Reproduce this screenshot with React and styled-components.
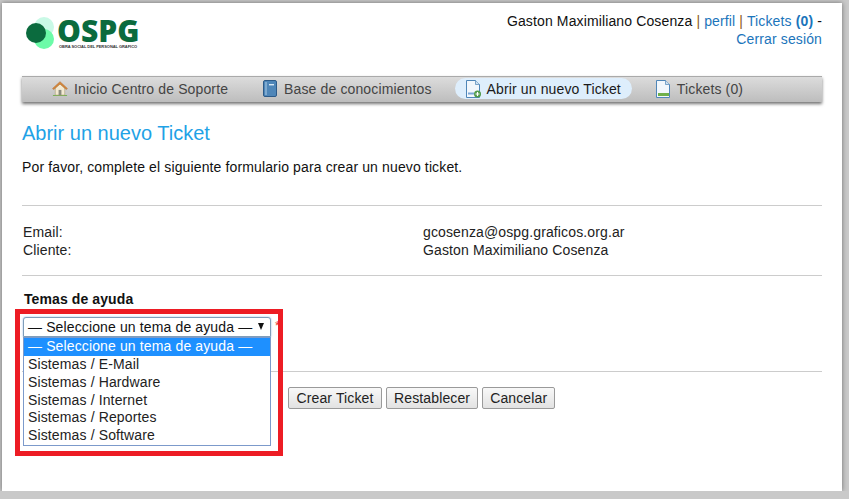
import React from 'react'
import styled, { createGlobalStyle } from 'styled-components'

const GlobalStyle = createGlobalStyle`
  html, body { margin: 0; padding: 0; background: #c9c9c9; }
  body { font-family: "Liberation Sans", Arial, sans-serif; font-size: 14px; letter-spacing: 0.13px; color: #000; overflow: hidden; }
`

const Page = styled.div`
  position: relative;
  box-sizing: border-box;
  width: 840px;
  height: 488px;
  margin: 3px 0 0 2px;
  padding: 0 20px;
  background: #fff;
  box-shadow: 0 0 5px rgba(0, 0, 0, 0.45);
`

const Header = styled.header`
  display: flex;
  justify-content: space-between;
  align-items: flex-start;
  height: 73px;
`

const Logo = styled.div`
  display: flex;
  align-items: flex-start;
  gap: 3px;
  margin: 14px 0 0 4px;
`

const LogoWords = styled.div`
  display: flex;
  flex-direction: column;
  letter-spacing: 0;
`

const LogoName = styled.span`
  font-family: "Open Sans", "Liberation Sans", sans-serif;
  font-weight: 800;
  font-size: 30px;
  line-height: 27px;
  color: #0b6b3e;
`

const LogoTag = styled.span`
  margin-left: 2px;
  font-weight: 700;
  font-size: 4px;
  line-height: 5px;
  letter-spacing: -0.05px;
  color: #333;
  white-space: nowrap;
`

const UserInfo = styled.div`
  width: 340px;
  margin-top: 9px;
  text-align: right;
  line-height: 18px;
  color: #111;
`

const Sep = styled.span`
  color: #8a5a20;
`

const TopLink = styled.a`
  color: #1b75bb;
  text-decoration: none;
`

const Nav = styled.nav`
  display: flex;
  align-items: center;
  box-sizing: border-box;
  height: 26px;
  padding: 0 0 2px 30px;
  border-top: 1px solid #aaa;
  background: linear-gradient(#dcdcdc, #bdbdbd);
  box-shadow: 0 2px 3px rgba(0, 0, 0, 0.55);
`

const NavItem = styled.a`
  display: flex;
  align-items: center;
  gap: 6px;
  height: 21px;
  margin-right: ${p => p.$gap}px;
  padding: ${p => (p.$active ? '0 11px' : '0')};
  margin-left: ${p => (p.$active ? '-11px' : '0')};
  border-radius: 11px;
  background: ${p => (p.$active ? '#deeefc' : 'transparent')};
  color: ${p => (p.$active ? '#1a1a1a' : '#444')};
  white-space: nowrap;
`

const Title = styled.h1`
  margin: 19px 0 0;
  font-size: 20px;
  line-height: 24px;
  font-weight: 400;
  letter-spacing: 0;
  color: #1fa2e6;
`

const Lead = styled.p`
  margin: 13px 0 0;
  line-height: 18px;
  color: #111;
`

const Rule = styled.hr`
  height: 1px;
  margin: ${p => p.$top}px 0 0;
  border: 0;
  background: #ccc;
`

const InfoGrid = styled.dl`
  display: grid;
  grid-template-columns: 400px 1fr;
  margin: 17px 0 0 1px;
  line-height: 18px;
  color: #222;
  dt, dd { margin: 0; }
`

const FieldLabel = styled.div`
  margin: 14px 0 0 2px;
  font-weight: 700;
  line-height: 18px;
  letter-spacing: 0.1px;
  color: #111;
`

const SelectWrap = styled.div`
  position: relative;
  width: 248px;
  height: 20px;
  margin: 9px 0 0 1px;
`

const SelectBox = styled.div`
  display: flex;
  justify-content: space-between;
  align-items: center;
  box-sizing: border-box;
  height: 20px;
  padding: 0 6px 0 4px;
  border: 1px solid #7f9db9;
  border-radius: 3px 3px 0 0;
  box-shadow: 0 0 2px #8fb4e8;
  background: #fff;
  color: #111;
  white-space: nowrap;
`

const Caret = styled.span`
  width: 0;
  height: 0;
  margin-top: -1px;
  border-left: 3.5px solid transparent;
  border-right: 3.5px solid transparent;
  border-top: 7px solid #111;
`

const Required = styled.span`
  position: absolute;
  left: 252px;
  top: 2px;
  font-size: 12px;
  color: #e33;
`

const OptionList = styled.ul`
  position: absolute;
  z-index: 2;
  top: 20px;
  left: 0;
  box-sizing: border-box;
  width: 248px;
  margin: 0;
  padding: 0;
  list-style: none;
  background: #fff;
  border: 1px solid #7c9acb;
`

const Option = styled.li`
  height: ${p => (p.$selected ? '18px' : '17.8px')};
  padding-left: 4px;
  line-height: ${p => (p.$selected ? '17px' : '17.8px')};
  background: ${p => (p.$selected ? '#1e90ff' : 'transparent')};
  color: ${p => (p.$selected ? '#fff' : '#222')};
  white-space: nowrap;
`

const Actions = styled.div`
  display: flex;
  gap: 4px;
  margin: 15px 0 0 266px;
`

const Btn = styled.button`
  box-sizing: border-box;
  height: 22px;
  padding: 0 ${p => p.$pad || 7}px;
  border: 1px solid #9a9a9a;
  border-radius: 2px;
  background: linear-gradient(#f8f8f8, #e2e2e2);
  font: 14px "Liberation Sans", Arial, sans-serif;
  letter-spacing: 0.13px;
  color: #222;
`

const Highlight = styled.div`
  position: absolute;
  z-index: 3;
  left: 13px;
  top: 306px;
  box-sizing: border-box;
  width: 268px;
  height: 147px;
  border: 5px solid #ed1c24;
  pointer-events: none;
`

function LogoMark() {
  return (
    <svg width="28" height="32" viewBox="0 0 28 32" style={{ flexShrink: 0 }}>
      <circle cx="18" cy="10" r="10" fill="#c9f9e6" />
      <circle cx="18" cy="22" r="10" fill="#6cfba8" />
      <circle cx="10" cy="16" r="10" fill="#0b6b3e" />
    </svg>
  )
}

function HouseIcon() {
  return (
    <svg width="16" height="17" viewBox="0 0 17 17">
      <path d="M1 15.5h15v1H1z" fill="#6fb04a" />
      <path d="M3.5 8v7.5h10V8L8.5 3.5z" fill="#f3ead2" stroke="#a89a70" strokeWidth=".6" />
      <path d="M.6 8.6 8.5 1.2l7.9 7.4-1.2 1-6.7-6-6.7 6z" fill="#d98a3c" stroke="#a85f20" strokeWidth=".5" />
      <path d="M7 10h3v5.5H7z" fill="#8c8c80" />
    </svg>
  )
}

function BookIcon() {
  return (
    <svg width="15" height="17" viewBox="0 0 15 17">
      <rect x=".5" y=".5" width="13" height="16" rx="1.5" fill="#4f86b8" stroke="#2d5a88" />
      <rect x="2" y="2" width="2" height="13" fill="#7eaad0" />
      <rect x="6" y="4" width="5" height="1.4" fill="#d9e8f4" />
    </svg>
  )
}

function DocIcon({ plus }) {
  return (
    <svg width="15" height="18" viewBox="0 0 15 18">
      <path d="M.5.5h9l4 4v13H.5z" fill="#f2f7fc" stroke="#4f86b8" />
      <path d="M9.5.5v4h4" fill="#cfe0f0" stroke="#4f86b8" strokeWidth=".7" />
      {plus ? (
        <>
          <rect x="2" y="12.5" width="6" height="2" fill="#7aa7d6" />
          <circle cx="11.5" cy="14" r="3.5" fill="#4f9a4a" />
          <path d="M9.5 14h4M11.5 12v4" stroke="#fff" strokeWidth="1.2" />
        </>
      ) : (
        <rect x="2" y="13" width="11" height="3" fill="#6fb04a" />
      )}
    </svg>
  )
}

export default function App() {
  return (
    <>
      <GlobalStyle />
      <Page>
        <Header>
          <Logo>
            <LogoMark />
            <LogoWords>
              <LogoName>OSPG</LogoName>
              <LogoTag>OBRA SOCIAL DEL PERSONAL GRAFICO</LogoTag>
            </LogoWords>
          </Logo>
          <UserInfo>
            Gaston Maximiliano Cosenza <Sep>|</Sep> <TopLink>perfil</TopLink> <Sep>|</Sep> <TopLink>Tickets <b>(0)</b></TopLink> -
            <br />
            <TopLink>Cerrar sesión</TopLink>
          </UserInfo>
        </Header>
        <Nav>
          <NavItem $gap={35}><HouseIcon />Inicio Centro de Soporte</NavItem>
          <NavItem $gap={34}><BookIcon />Base de conocimientos</NavItem>
          <NavItem $gap={24} $active><DocIcon plus />Abrir un nuevo Ticket</NavItem>
          <NavItem $gap={0}><DocIcon />Tickets (0)</NavItem>
        </Nav>
        <Title>Abrir un nuevo Ticket</Title>
        <Lead>Por favor, complete el siguiente formulario para crear un nuevo ticket.</Lead>
        <Rule $top={29} />
        <InfoGrid>
          <dt>Email:</dt><dd>gcosenza@ospg.graficos.org.ar</dd>
          <dt>Cliente:</dt><dd>Gaston Maximiliano Cosenza</dd>
        </InfoGrid>
        <Rule $top={16} />
        <FieldLabel>Temas de ayuda</FieldLabel>
        <SelectWrap>
          <SelectBox>— Seleccione un tema de ayuda —<Caret /></SelectBox>
          <Required>*</Required>
          <OptionList>
            <Option $selected>— Seleccione un tema de ayuda —</Option>
            <Option>Sistemas / E-Mail</Option>
            <Option>Sistemas / Hardware</Option>
            <Option>Sistemas / Internet</Option>
            <Option>Sistemas / Reportes</Option>
            <Option>Sistemas / Software</Option>
          </OptionList>
        </SelectWrap>
        <Rule $top={34} />
        <Actions>
          <Btn $pad={7.5}>Crear Ticket</Btn>
          <Btn>Restablecer</Btn>
          <Btn>Cancelar</Btn>
        </Actions>
        <Highlight />
      </Page>
    </>
  )
}
